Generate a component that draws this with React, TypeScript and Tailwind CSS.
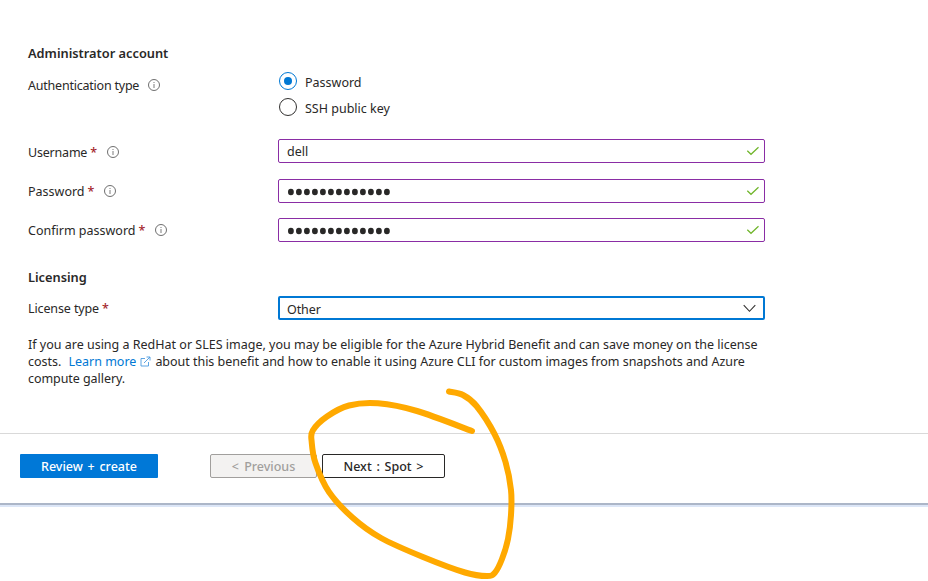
import type { ReactNode } from "react";

const STROKE_POINTS: [number, number][] = [
  [449, 391.5], [463, 395], [476.5, 406], [494.5, 434], [505.5, 462], [511, 490], [511, 515], [508, 539],
  [502, 559], [495, 572.5], [487, 576], [465, 572.5], [423, 557], [381, 538], [353, 518], [329, 492], [315.5, 463],
  [311.7, 442], [312.8, 430.500], [327, 416.5], [349, 405.5], [378, 403.3], [417, 411], [472, 431],
];

// Catmull-Rom spline through the points, written as cubic segments.
function smoothPath(pts: [number, number][]) {
  let d = `M${pts[0][0]} ${pts[0][1]}`;
  for (let i = 0; i < pts.length - 1; i++) {
    const a = pts[Math.max(i - 1, 0)];
    const b = pts[i];
    const c = pts[i + 1];
    const e = pts[Math.min(i + 2, pts.length - 1)];
    d += `C${b[0] + (c[0] - a[0]) / 6} ${b[1] + (c[1] - a[1]) / 6} ${c[0] - (e[0] - b[0]) / 6} ${c[1] - (e[1] - b[1]) / 6} ${c[0]} ${c[1]}`;
  }
  return d;
}

function InfoIcon() {
  return (
    <svg width="12" height="12" viewBox="0 0 12 12" fill="none" className="ml-[9px] shrink-0">
      <circle cx="6" cy="6" r="5.5" stroke="#5f5f5f" strokeWidth="0.9" />
      <path d="M6 5v4M6 3v1" stroke="#888" strokeWidth="1.1" />
    </svg>
  );
}

function Check() {
  return (
    <svg width="14" height="10" viewBox="0 0 14 10" fill="none">
      <path d="M1.3 4.8L5 8.3L12.5 1.2" stroke="#70b52b" strokeWidth="1.2" />
    </svg>
  );
}

function Label({ children, required, info = true }: { children: ReactNode; required?: boolean; info?: boolean }) {
  return (
    <div className="flex h-[18px] w-[250px] shrink-0 items-center whitespace-nowrap">
      {children}
      {required && <span className="ml-[3px] w-[7.500px] font-medium text-[#a4262c]">*</span>}
      {info && <InfoIcon />}
    </div>
  );
}

function Field({ value, secret }: { value: string; secret?: boolean }) {
  return (
    <div className="flex h-6 w-[487px] items-center justify-between rounded-[2px] border border-[#8a2da5] pl-[8px] pr-[4px]">
      {secret ? (
        <svg width="106" height="8" viewBox="0 0 106 8" className="mt-px">
          {Array.from(value).map((_, i) => (
            <ellipse key={i} cx={3.9 + i * 8} cy="4" rx="2.9" ry="3.2" fill="#292827" />
          ))}
        </svg>
      ) : (
        <span className="pt-px">{value}</span>
      )}
      <Check />
    </div>
  );
}

export default function App() {
  return (
    <div className="relative h-[581px] w-[928px] overflow-hidden bg-white font-['Noto_Sans',sans-serif] text-[12.5px] leading-[17px] text-[#292827]">
      <main className="flex h-[433px] flex-col pl-7 pt-[44px]">
        <h2 className="h-[18px] text-[12.8px] font-semibold leading-[18px]">Administrator account</h2>
        <div className="mt-[10px] flex h-[46px]">
          <div className="pt-[4px]">
            <Label>
              <span className="tracking-[-0.22px]">Authentication type</span>
            </Label>
          </div>
          <div className="flex flex-col gap-[8px]">
            <div className="flex h-[18px] items-center gap-[8px]">
              <span className="ml-[1px] flex h-[18px] w-[18px] items-center justify-center rounded-full border border-[#0078d4]">
                <span className="h-2 w-2 rounded-full bg-[#0078d4]" />
              </span>
              <span className="pt-[3px]">Password</span>
            </div>
            <div className="flex h-[18px] items-center gap-[8px]">
              <span className="ml-[1px] h-[18px] w-[18px] rounded-full border border-[#323130]" />
              <span className="pt-[3px]">SSH public key</span>
            </div>
          </div>
        </div>
        <div className="mt-[21px] flex h-6 items-center">
          <div className="pt-[2px] tracking-[-0.2px]">
            <Label required>Username</Label>
          </div>
          <Field value="dell" />
        </div>
        <div className="mt-[16px] flex h-6 items-center">
          <Label required>Password</Label>
          <Field value="*************" secret />
        </div>
        <div className="mt-[15px] flex h-6 items-center">
          <Label required>Confirm password</Label>
          <Field value="*************" secret />
        </div>
        <h2 className="mt-[26px] h-[18px] text-[12.8px] font-semibold leading-[18px]">Licensing</h2>
        <div className="mt-[10px] flex h-6 items-center">
          <div className="tracking-[-0.12px]">
            <Label required info={false}>License type</Label>
          </div>
          <div className="flex h-6 w-[487px] items-center justify-between rounded-[2px] border-2 border-[#0078d4] pl-[7px] pr-[6px]">
            <span className="pt-[2px] tracking-[-0.1px]">Other</span>
            <svg width="14" height="9" viewBox="0 0 14 9" fill="none">
              <path d="M0.7 1.2L6.5 7.3L12.3 1.2" stroke="#323130" strokeWidth="1.1" />
            </svg>
          </div>
        </div>
        <p className="mt-[16px] whitespace-nowrap">
          <span className="block">If you are using a RedHat or SLES image, you may be eligible for the Azure Hybrid Benefit and can save money on the license</span>
          <span className="flex items-center">
            <span>costs.</span>
            <span className="ml-[7px] text-[#0078d4]">Learn more</span>
            <svg width="11" height="11" viewBox="0 0 11 11" fill="none" className="mx-[4px]">
              <path d="M5 2.5H1v7.5h7.5V6M4 7L10 1M6.5 1H10v3.5" stroke="#4c9be0" strokeWidth="0.9" />
            </svg>
            <span className="tracking-[-0.025px]">about this benefit and how to enable it using Azure CLI for custom images from snapshots and Azure</span>
          </span>
          <span className="block tracking-[-0.06px]">compute gallery.</span>
        </p>
      </main>
      <footer className="flex h-[70px] border-t border-[#d9d9d9] pl-5 pt-[20px] font-medium">
        <button className="h-6 w-[138px] rounded-[1px] bg-[#0078d7] text-white [word-spacing:1.5px]">Review + create</button>
        <button className="ml-[52px] h-6 w-[107px] rounded-[2px] border border-[#a19f9d] bg-[#f3f2f1] text-[#a19f9d] [word-spacing:2px]">&lt; Previous</button>
        <button className="ml-[5px] h-6 w-[123px] rounded-[2px] border border-[#292827] bg-white [word-spacing:1.5px]">Next : Spot &gt;</button>
      </footer>
      <div className="h-[4px] border-b-2 border-t-2 border-b-[#dce6f7] border-t-[#acb6c8]" />
      <svg width="928" height="581" viewBox="0 0 928 581" fill="none" className="pointer-events-none absolute left-0 top-0">
        <path d={smoothPath(STROKE_POINTS)} stroke="#ffa900" strokeWidth="6" strokeLinecap="round" strokeLinejoin="round" />
      </svg>
    </div>
  );
}
